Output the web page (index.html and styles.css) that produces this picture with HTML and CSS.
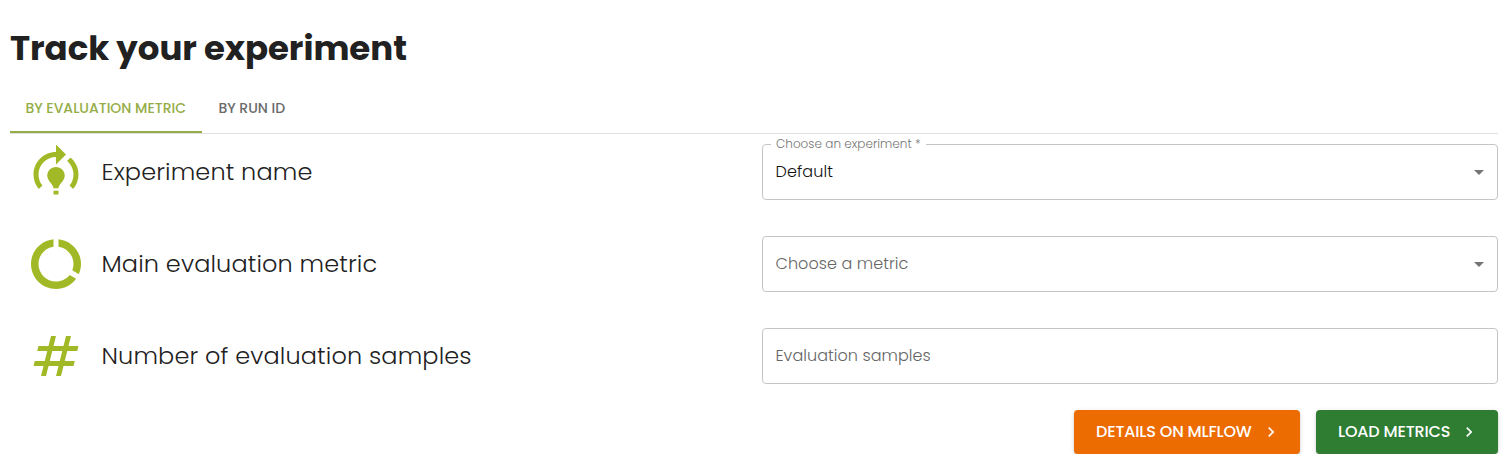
FILE: index.html
```
<!DOCTYPE html>
<html lang="en">
<head>
<meta charset="utf-8">
<title>Track your experiment</title>
<link rel="stylesheet" href="styles.css">
</head>
<body>
<main class="page">
  <h1 class="title">Track your experiment</h1>
  <nav class="tabs">
    <a class="tab tab-active">BY EVALUATION METRIC</a>
    <a class="tab">BY RUN ID</a>
  </nav>
  <section class="rows">
    <div class="row">
      <svg class="icon" viewBox="0 0 24 24"><path d="M15.5 13.5c0 2-2.5 3.5-2.5 5h-2c0-1.5-2.5-3-2.5-5 0-1.93 1.57-3.5 3.5-3.5s3.5 1.57 3.5 3.5zm-2.5 6h-2V21h2v-1.5zm6-6.5c0 1.68-.59 3.21-1.58 4.42l1.42 1.42C20.18 17.27 21 15.23 21 13c0-2.74-1.23-5.19-3.16-6.84l-1.42 1.42C17.99 8.86 19 10.82 19 13zm-3-8-4-4v3c-4.97 0-9 4.03-9 9 0 2.23.82 4.27 2.16 5.84l1.42-1.42C5.59 16.21 5 14.68 5 13c0-3.86 3.14-7 7-7v3l4-4z"/></svg>
      <span class="label">Experiment name</span>
      <div class="field">
        <span class="legend">Choose an experiment *</span>
        <span class="value">Default</span>
        <svg class="arrow" viewBox="0 0 24 24"><path d="m7 10 5 5 5-5z"/></svg>
      </div>
    </div>
    <div class="row">
      <svg class="icon" viewBox="0 0 24 24"><path d="M13 2.05v3.03c3.39.49 6 3.39 6 6.92 0 .9-.18 1.75-.48 2.54l2.6 1.53c.56-1.24.88-2.62.88-4.07 0-5.18-3.95-9.45-9-9.95zM12 19c-3.87 0-7-3.13-7-7 0-3.53 2.61-6.43 6-6.92V2.05c-5.06.5-9 4.76-9 9.95 0 5.52 4.47 10 9.99 10 3.31 0 6.24-1.61 8.06-4.09l-2.6-1.53C16.17 17.98 14.21 19 12 19z"/></svg>
      <span class="label">Main evaluation metric</span>
      <div class="field">
        <span class="placeholder">Choose a metric</span>
        <svg class="arrow" viewBox="0 0 24 24"><path d="m7 10 5 5 5-5z"/></svg>
      </div>
    </div>
    <div class="row">
      <svg class="icon" viewBox="0 0 24 24"><path d="m20.5 10 .5-2h-4l1-4h-2l-1 4h-4l1-4h-2L9 8H5l-.5 2h4l-1 4h-4L3 16h4l-1 4h2l1-4h4l-1 4h2l1-4h4l.5-2h-4l1-4h4zm-7 4h-4l1-4h4l-1 4z"/></svg>
      <span class="label">Number of evaluation samples</span>
      <div class="field">
        <span class="placeholder">Evaluation samples</span>
      </div>
    </div>
  </section>
  <div class="actions">
    <button class="button button-details"><span>DETAILS ON MLFLOW</span><svg class="chevron" viewBox="0 0 24 24"><path d="M10 6 8.59 7.41 13.17 12l-4.58 4.59L10 18l6-6z"/></svg></button>
    <button class="button button-load"><span>LOAD METRICS</span><svg class="chevron" viewBox="0 0 24 24"><path d="M10 6 8.59 7.41 13.17 12l-4.58 4.59L10 18l6-6z"/></svg></button>
  </div>
</main>
</body>
</html>
```
FILE: styles.css
```
* { box-sizing: border-box; }
body {
  margin: 0;
  background: #fff;
  color: #212121;
  font-family: Poppins, Inter, sans-serif;
  font-feature-settings: "cv11";
}
.page { padding: 24px 12px 0 10px; }
.title {
  margin: 0;
  height: 48px;
  font-size: 34px;
  line-height: 48px;
  font-weight: 700;
  letter-spacing: -0.03px;
  white-space: nowrap;
}
.tabs {
  display: flex;
  margin-top: 12px;
  height: 50px;
  border-bottom: 1px solid #e0e0e0;
  font-size: 14px;
  font-weight: 500;
  line-height: 49px;
  white-space: nowrap;
}
.tab { padding-left: 16.4px; color: #6b6b6b; }
.tab-active { width: 192px; padding-left: 15.4px; color: #94ad46; border-bottom: 2px solid #94ad46; }
.rows { display: flex; flex-direction: column; gap: 36px; padding-top: 10px; }
.row { display: flex; align-items: center; height: 56px; padding-left: 16px; }
.icon { flex: none; width: 60px; height: 60px; margin-right: 15px; fill: #a2b927; }
.label {
  flex: 1;
  padding-left: 0.5px;
  font-size: 24px;
  font-weight: 300;
  letter-spacing: 0.13px;
  line-height: 36px;
  white-space: nowrap;
}
.field {
  position: relative;
  display: flex;
  align-items: center;
  justify-content: space-between;
  width: 736px;
  height: 56px;
  padding: 0 6px 2px 12.5px;
  border: 1px solid #c4c4c4;
  border-radius: 4px;
  font-size: 16px;
  letter-spacing: 0.06px;
}
.legend {
  position: absolute;
  top: -10px;
  left: 8px;
  width: 155px;
  padding: 0 5px;
  background: #fff;
  color: #777;
  font-size: 12px;
  font-weight: 300;
  letter-spacing: 0.02px;
  line-height: 18px;
  white-space: nowrap;
}
.value { color: #111; font-weight: 300; letter-spacing: 0.13px; }
.placeholder { color: #666; font-weight: 300; }
.arrow { width: 24px; height: 24px; fill: #757575; transform: translateY(1px); }
.actions { display: flex; justify-content: flex-end; gap: 16px; margin-top: 26px; }
.button {
  display: flex;
  align-items: center;
  justify-content: space-between;
  height: 44px;
  padding: 0 19px 0 22px;
  border: 0;
  border-radius: 4px;
  color: #fff;
  font: 500 16px/26px Poppins, Inter, sans-serif;
  letter-spacing: -0.16px;
  white-space: nowrap;
  box-shadow: 0 3px 1px -2px rgba(0,0,0,.2), 0 2px 2px rgba(0,0,0,.14), 0 1px 5px rgba(0,0,0,.12);
}
.button-details { width: 226px; background: #ed6c02; }
.button-load { width: 182px; background: #2e7d32; }
.chevron { width: 20px; height: 20px; fill: currentColor; }
```
